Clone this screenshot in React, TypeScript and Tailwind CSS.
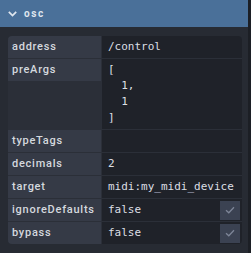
const rows: { label: string; value: string; check?: boolean; multi?: string[] }[] = [
  { label: "address", value: "/control" },
  { label: "preArgs", value: "", multi: ["[", "  1,", "  1", "]"] },
  { label: "typeTags", value: "" },
  { label: "decimals", value: "2" },
  { label: "target", value: "midi:my_midi_device" },
  { label: "ignoreDefaults", value: "false", check: true },
  { label: "bypass", value: "false", check: true },
];

const Check = () => (
  <svg width="10" height="8" viewBox="0 0 10 8" fill="none">
    <path d="M1 4.2 L3.8 6.8 L9 1.2" stroke="#7d8597" strokeWidth="1.3" />
  </svg>
);

export default function App() {
  return (
    <div className="flex h-[253px] w-[251px] bg-[#272b33] font-['Roboto',sans-serif]">
      <div className="flex flex-1 flex-col">
        <div className="flex h-[27px] items-center gap-[7px] bg-[#4a7099] pl-[8px]">
          <svg width="9" height="6" viewBox="0 0 9 6" fill="none">
            <path d="M0.8 0.8 L4.5 4.6 L8.2 0.8" stroke="#dfe6ee" strokeWidth="1.7" />
          </svg>
          <span className="text-[10px] font-bold tracking-[1.6px] text-[#dfe6ee]">osc</span>
        </div>
        <div className="pl-[8px] pr-[6px] pt-[9px]">
          <div className="flex flex-col gap-px overflow-hidden rounded-[4px] bg-[#2b2f38]">
            {rows.map((r) => (
              <div key={r.label} className="flex gap-px">
                <div className="flex h-[22px] w-[93px] items-center self-start bg-[#353a46] pl-[4px] text-[11px] font-medium tracking-[0.75px] text-[#d4d8de]">
                  {r.label}
                </div>
                <div className="flex flex-1 items-center justify-between bg-[#1f2229] pl-[6px] pr-[2px] font-['DejaVu_Sans_Mono',monospace] text-[11px] text-[#dcdfe4]">
                  {r.multi ? (
                    <pre className="py-[3px] font-['DejaVu_Sans_Mono',monospace] leading-[16px]">{r.multi.join("\n")}</pre>
                  ) : (
                    <span className="flex h-[22px] items-center">{r.value}</span>
                  )}
                  {r.check && (
                    <div className="flex h-[19px] w-[20px] items-center justify-center bg-[#3b4252]">
                      <Check />
                    </div>
                  )}
                </div>
              </div>
            ))}
          </div>
        </div>
      </div>
      <div className="w-[3px] bg-[#1c1f25]" />
    </div>
  );
}
